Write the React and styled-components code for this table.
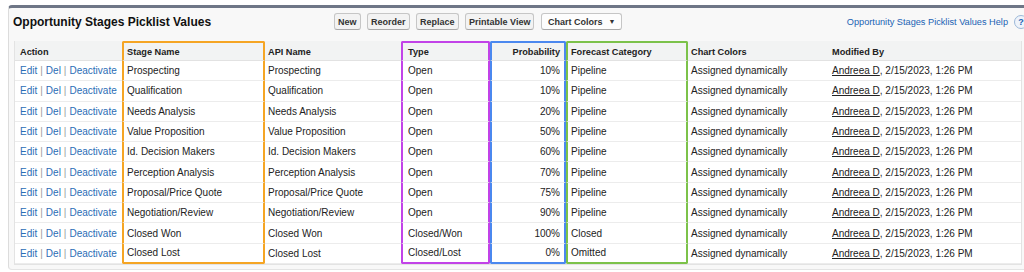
import React from "react";
import styled, { createGlobalStyle } from "styled-components";

const GlobalStyle = createGlobalStyle`
  body {
    margin: 0;
    background: #ffffff;
    font-family: "Liberation Sans", Arial, sans-serif;
    overflow: hidden;
  }
`;

const Page = styled.div`
  padding: 5px 0 0 8px;
  width: 1040px;
`;

const Panel = styled.div`
  width: 1030px;
  background: #f8f8f8;
  border-top: 3px solid #6e7686;
  border-left: 1px solid #dcdcdc;
  border-bottom: 1px solid #e4e4e4;
  border-radius: 4px 0 0 4px;
  padding: 0 0 4px 5px;
  box-sizing: border-box;
`;

const TitleBar = styled.div`
  display: flex;
  align-items: center;
  height: 27px;
  margin-bottom: 6px;
`;

const Title = styled.h2`
  width: 321px;
  margin: 0 0 0 -1px;
  font-size: 12px;
  font-weight: bold;
  color: #111;
`;

const Buttons = styled.div`
  display: flex;
  gap: 6.5px;
  flex: 1;
`;

const Btn = styled.button`
  display: flex;
  align-items: center;
  gap: 6px;
  height: 17px;
  padding: 0 ${(p) => (p.$menu ? "6px" : "3px")};
  font-family: "Liberation Sans", Arial, sans-serif;
  font-size: 9px;
  font-weight: bold;
  color: #333;
  background: ${(p) => (p.$menu ? "#fdfdfd" : "#f3f3f3")};
  border: 1px solid #c6c6c6;
  border-bottom-color: #a9a9a9;
  border-radius: 3px;
`;

const Caret = styled.span`
  font-size: 7px;
  color: #333;
`;

const Help = styled.div`
  display: flex;
  align-items: center;
  gap: 6px;
  margin-right: 10px;
  font-size: 9.2px;
  color: #1b63b4;
`;

const HelpIcon = styled.span`
  width: 12px;
  height: 12px;
  border-radius: 50%;
  border: 1px solid #9cb8d8;
  background: #eef3fa;
  color: #1b63b4;
  font-size: 9px;
  font-weight: bold;
  display: flex;
  align-items: center;
  justify-content: center;
`;

const Table = styled.table`
  width: 1006px;
  table-layout: fixed;
  border-collapse: separate;
  border-spacing: 0;
  background: #ffffff;
  border: 1px solid #e3e3e3;
  border-top: none;
  font-size: 10px;
  color: #222;
`;

const Cell = styled.td`
  height: ${(p) => (p.$head ? "20px" : "20.3px")};
  padding: 0 ${(p) => p.$pr}px 0 ${(p) => p.$pl}px;
  box-sizing: border-box;
  text-align: ${(p) => p.$align};
  white-space: nowrap;
  overflow: hidden;
  font-weight: ${(p) => (p.$head ? "bold" : "normal")};
  font-size: ${(p) => (p.$head ? "9.2px" : "10px")};
  background: ${(p) => (p.$head ? "#f2f3f3" : "#ffffff")};
  border-bottom: 1px solid ${(p) => (p.$head ? "#e2e2e2" : "#ececec")};
  border-left: ${(p) => (p.$box ? `2px solid ${p.$box}` : "none")};
  border-right: ${(p) => (p.$box ? `2px solid ${p.$box}` : "none")};
  ${(p) => p.$head && `border-top: 2px solid ${p.$box || "#f2f3f3"};`}
  ${(p) => p.$box && p.$head && `border-radius: 2px 2px 0 0;`}
  ${(p) => p.$box && p.$last && `border-bottom: 2px solid ${p.$box}; border-radius: 0 0 2px 2px;`}
`;

const Link = styled.a`
  color: #2a6db6;
  text-decoration: none;
`;

const Sep = styled.span`
  color: #9a9a9a;
  margin: 0 3px;
`;

const User = styled.span`
  color: #222;
  text-decoration: underline;
`;

const columns = [
  { key: "action", label: "Action", w: 107, pl: 5 },
  { key: "stage", label: "Stage Name", w: 143, pl: 3, box: "#f5a524" },
  { key: "api", label: "API Name", w: 136, pl: 3 },
  { key: "type", label: "Type", w: 89, pl: 5, box: "#c243e8" },
  { key: "prob", label: "Probability", w: 76, pl: 3, pr: 4, align: "right", box: "#4b88ef" },
  { key: "forecast", label: "Forecast Category", w: 122, pl: 3, box: "#7cc24a" },
  { key: "chart", label: "Chart Colors", w: 140, pl: 3 },
  { key: "mod", label: "Modified By", w: 193, pl: 4 },
];

const stages = [
  ["Prospecting", "Open", "10%", "Pipeline"],
  ["Qualification", "Open", "10%", "Pipeline"],
  ["Needs Analysis", "Open", "20%", "Pipeline"],
  ["Value Proposition", "Open", "50%", "Pipeline"],
  ["Id. Decision Makers", "Open", "60%", "Pipeline"],
  ["Perception Analysis", "Open", "70%", "Pipeline"],
  ["Proposal/Price Quote", "Open", "75%", "Pipeline"],
  ["Negotiation/Review", "Open", "90%", "Pipeline"],
  ["Closed Won", "Closed/Won", "100%", "Closed"],
  ["Closed Lost", "Closed/Lost", "0%", "Omitted"],
];

function renderValue(key, row) {
  const [name, type, prob, forecast] = row;
  switch (key) {
    case "action":
      return (
        <>
          <Link>Edit</Link>
          <Sep>|</Sep>
          <Link>Del</Link>
          <Sep>|</Sep>
          <Link>Deactivate</Link>
        </>
      );
    case "stage":
    case "api":
      return name;
    case "type":
      return type;
    case "prob":
      return prob;
    case "forecast":
      return forecast;
    case "chart":
      return "Assigned dynamically";
    default:
      return (
        <>
          <User>Andreea D</User>, 2/15/2023, 1:26 PM
        </>
      );
  }
}

export default function App() {
  return (
    <Page>
      <GlobalStyle />
      <Panel>
        <TitleBar>
          <Title>Opportunity Stages Picklist Values</Title>
          <Buttons>
            <Btn>New</Btn>
            <Btn>Reorder</Btn>
            <Btn>Replace</Btn>
            <Btn>Printable View</Btn>
            <Btn $menu>
              Chart Colors <Caret>▼</Caret>
            </Btn>
          </Buttons>
          <Help>
            Opportunity Stages Picklist Values Help
            <HelpIcon>?</HelpIcon>
          </Help>
        </TitleBar>
        <Table>
          <colgroup>
            {columns.map((c) => (
              <col key={c.key} style={{ width: c.w }} />
            ))}
          </colgroup>
          <thead>
            <tr>
              {columns.map((c) => (
                <Cell
                  as="th"
                  key={c.key}
                  $head
                  $box={c.box}
                  $pl={c.pl}
                  $pr={c.pr || 2}
                  $align={c.align || "left"}
                >
                  {c.label}
                </Cell>
              ))}
            </tr>
          </thead>
          <tbody>
            {stages.map((row, i) => (
              <tr key={row[0]}>
                {columns.map((c) => (
                  <Cell
                    key={c.key}
                    $box={c.box}
                    $last={i === stages.length - 1}
                    $pl={c.pl}
                    $pr={c.pr || 2}
                    $align={c.align || "left"}
                  >
                    {renderValue(c.key, row)}
                  </Cell>
                ))}
              </tr>
            ))}
          </tbody>
        </Table>
      </Panel>
    </Page>
  );
}
